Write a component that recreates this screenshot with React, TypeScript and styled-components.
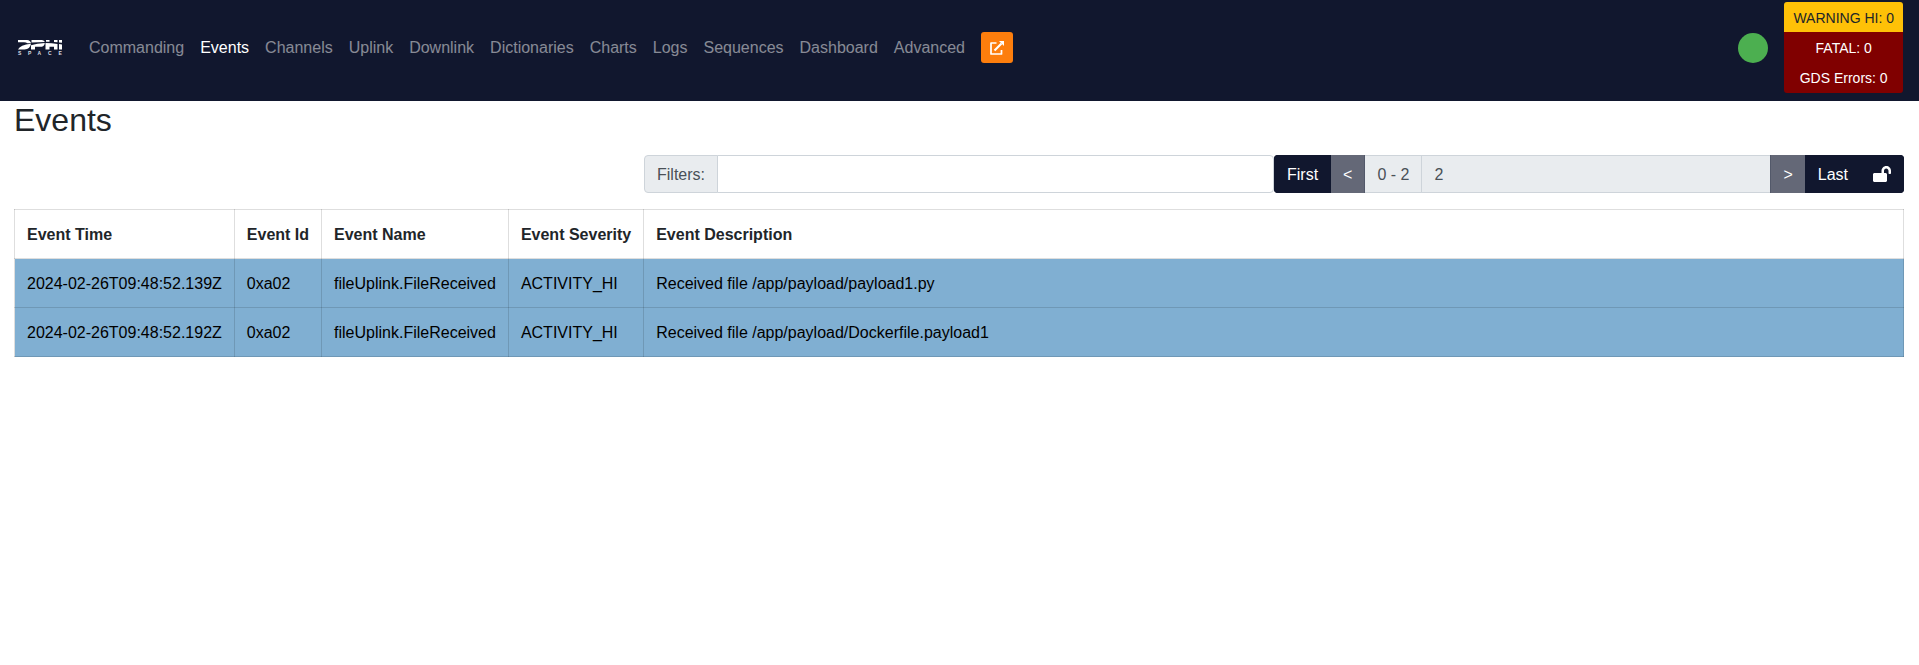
import React from "react";
import styled, { createGlobalStyle } from "styled-components";
import { FaLockOpen } from "react-icons/fa";

const navy = "#11172e";

const GlobalStyle = createGlobalStyle`
  *, *::before, *::after { box-sizing: border-box; }
  body {
    margin: 0;
    background: #fff;
    color: #212529;
    font-family: "Liberation Sans", Arial, sans-serif;
    font-size: 16px;
    line-height: 24px;
  }
  button, input { font: inherit; }
`;

const Header = styled.header`
  display: flex;
  align-items: center;
  padding: 2px 16px 8px;
  background: ${navy};
`;

const Brand = styled.a`
  display: flex;
  margin-right: 17px;
`;

const Nav = styled.nav`
  display: flex;
  align-items: center;
  flex: 1;
`;

const NavLink = styled.a<{ $active?: boolean }>`
  padding: 8px;
  color: ${(p) => (p.$active ? "#fff" : "rgba(255, 255, 255, 0.5)")};
  text-decoration: none;
`;

const NewWindowButton = styled.button`
  display: flex;
  align-items: center;
  justify-content: center;
  width: 32px;
  height: 31px;
  margin-left: 8px;
  padding: 0;
  border: 0;
  border-radius: 3px;
  background: #fd7e0d;
  color: #fff;
`;

const StatusLight = styled.span`
  width: 30px;
  height: 30px;
  margin-right: 16px;
  border-radius: 50%;
  background: #4caf50;
`;

const Alerts = styled.div`
  display: flex;
  flex-direction: column;
  border-radius: 3px;
  overflow: hidden;
`;

const AlertButton = styled.button<{ $warning?: boolean }>`
  padding: 6px 9px 4px;
  border: 0;
  background: ${(p) => (p.$warning ? "#ffc107" : "#800000")};
  color: ${(p) => (p.$warning ? "#212529" : "#fff")};
  font-size: 14px;
  line-height: 20px;

  &:last-child {
    padding-bottom: 5px;
  }
`;

const Main = styled.main`
  padding: 0 15px 0 14px;
`;

const Title = styled.h1`
  margin: 0 0 16px;
  font-size: 32px;
  font-weight: 400;
  line-height: 38px;
`;

const Toolbar = styled.div`
  display: grid;
  grid-template-columns: repeat(3, 1fr);
  margin-bottom: 16px;
`;

const FilterGroup = styled.div`
  grid-column: 2;
  display: flex;
  min-width: 0;
`;

const Addon = styled.label`
  padding: 7px 12px 5px;
  border: 1px solid #ced4da;
  border-radius: 4px 0 0 4px;
  background: #e9ecef;
  color: #495057;
`;

const FilterInput = styled.input`
  flex: 1;
  min-width: 0;
  margin-left: -1px;
  padding: 7px 12px 5px;
  border: 1px solid #ced4da;
  border-radius: 0 4px 4px 0;
  background: #fff;
  color: #495057;
`;

const Pager = styled.div`
  display: flex;
  min-width: 0;
  border-radius: 4px;
  overflow: hidden;

  & > * + * {
    margin-left: -1px;
  }
`;

const PageButton = styled.button`
  display: flex;
  align-items: center;
  padding: 7px 12px 5px;
  border: 1px solid ${navy};
  background: ${navy};
  color: #fff;

  &:disabled {
    opacity: 0.65;
  }

  svg {
    margin-bottom: 2px;
  }
`;

const PageInfo = styled.span<{ $grow?: boolean }>`
  flex: ${(p) => (p.$grow ? "1" : "none")};
  padding: 7px 12px 5px;
  border: 1px solid #ced4da;
  background: #e9ecef;
  color: #495057;
`;

const Table = styled.table`
  width: 100%;
  border-collapse: collapse;
`;

const HeadCell = styled.th`
  padding: 13px 12px 11px;
  border: 1px solid rgba(0, 0, 0, 0.13);
  text-align: left;
  white-space: nowrap;

  &:last-child {
    width: 100%;
  }
`;

const EventRow = styled.tr`
  background: #80afd2;
  color: #000;
`;

const Cell = styled.td`
  padding: 13px 12px 11px;
  border: 1px solid rgba(0, 0, 0, 0.13);
  white-space: nowrap;
`;

const links = [
  "Commanding", "Events", "Channels", "Uplink", "Downlink", "Dictionaries",
  "Charts", "Logs", "Sequences", "Dashboard", "Advanced",
];

const columns = ["Event Time", "Event Id", "Event Name", "Event Severity", "Event Description"];

const events = [
  ["2024-02-26T09:48:52.139Z", "0xa02", "fileUplink.FileReceived", "ACTIVITY_HI", "Received file /app/payload/payload1.py"],
  ["2024-02-26T09:48:52.192Z", "0xa02", "fileUplink.FileReceived", "ACTIVITY_HI", "Received file /app/payload/Dockerfile.payload1"],
];

function Logo() {
  return (
    <svg width="48" height="18" viewBox="0 0 48 18" role="img" aria-label="DPHI Space">
      <g fill="#fff">
        <path d="M2 1H11Q14.500 1.300 15 4.300H11.500Q10 3.300 8 3.300H2Z" />
        <path d="M2 10.500Q4 6 15 4.800Q14 10.500 8.500 10.500Z" />
        <path d="M15.500 1H26Q28.500 1.400 28.800 3L15.500 3.600Z" />
        <path d="M15 6.300Q21 4.200 28.800 3.900Q28.500 7.800 24 7.800H19V10.500H15Z" />
        <path d="M30 1H33.500V2.700L30 2.800ZM38 1H41.500V3.300L38 2.900Z" />
        <path d="M29.500 3.900Q36 3.900 41.500 5V10.500H38V7.800H33.500V10.500H29.500Z" />
        <path d="M43 1H46V3.700L43 3.400ZM43 5L46 5.500V10.500H43Z" />
      </g>
      <text x="2 12 21.500 32 42.500" y="16" fill="#dcdde2" fontFamily="Liberation Sans, sans-serif" fontSize="5" fontWeight="700">SPACE</text>
    </svg>
  );
}

function NewWindowIcon() {
  return (
    <svg width="14" height="14" viewBox="0 0 14 14" aria-hidden="true">
      <path d="M6.500 2H1V13H11.500V9" fill="none" stroke="currentColor" strokeWidth="1.700" strokeLinejoin="round" />
      <path d="M4.500 9.500L11.500 2.500" fill="none" stroke="currentColor" strokeWidth="2.200" />
      <path d="M9 0H14V5Z" fill="currentColor" />
    </svg>
  );
}

export default function App() {
  return (
    <>
      <GlobalStyle />
      <Header>
        <Brand href="#"><Logo /></Brand>
        <Nav>
          {links.map((name) => (
            <NavLink key={name} href={`#${name}`} $active={name === "Events"}>{name}</NavLink>
          ))}
          <NewWindowButton aria-label="Open in new window">
            <NewWindowIcon />
          </NewWindowButton>
        </Nav>
        <StatusLight />
        <Alerts>
          <AlertButton $warning>WARNING HI: 0</AlertButton>
          <AlertButton>FATAL: 0</AlertButton>
          <AlertButton>GDS Errors: 0</AlertButton>
        </Alerts>
      </Header>
      <Main>
        <Title>Events</Title>
        <Toolbar>
          <FilterGroup>
            <Addon htmlFor="filters">Filters:</Addon>
            <FilterInput id="filters" type="text" />
          </FilterGroup>
          <Pager>
            <PageButton>First</PageButton>
            <PageButton disabled>&lt;</PageButton>
            <PageInfo>0 - 2</PageInfo>
            <PageInfo $grow>2</PageInfo>
            <PageButton disabled>&gt;</PageButton>
            <PageButton>Last</PageButton>
            <PageButton aria-label="Toggle scroll lock"><FaLockOpen size={18} /></PageButton>
          </Pager>
        </Toolbar>
        <Table>
          <thead>
            <tr>{columns.map((name) => <HeadCell key={name}>{name}</HeadCell>)}</tr>
          </thead>
          <tbody>
            {events.map((event) => (
              <EventRow key={event[0]}>
                {event.map((value, i) => <Cell key={columns[i]}>{value}</Cell>)}
              </EventRow>
            ))}
          </tbody>
        </Table>
      </Main>
    </>
  );
}
